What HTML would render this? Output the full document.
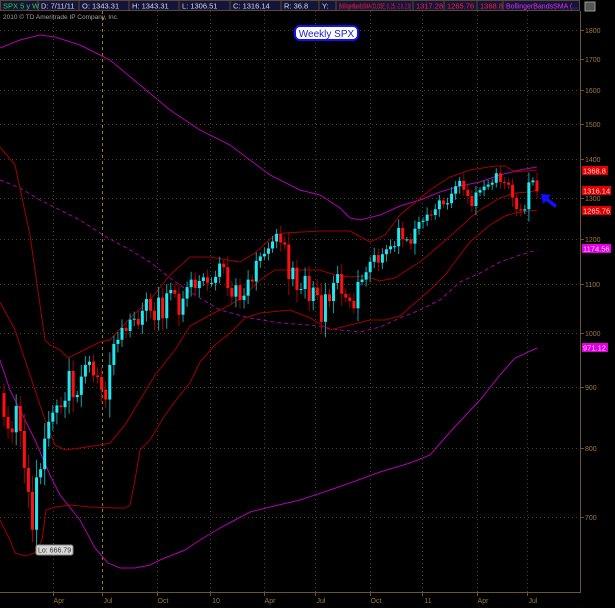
<!DOCTYPE html><html><head><style>
body{margin:0;background:#000;width:615px;height:608px;overflow:hidden;font-family:"Liberation Sans",sans-serif}
svg{display:block}
</style></head><body>
<svg id="s" width="615" height="608" xmlns="http://www.w3.org/2000/svg" font-family="Liberation Sans, sans-serif">
<rect width="615" height="608" fill="#000"/>
<g id="grid"></g>
<g fill="none" stroke-width="1">
<polyline stroke="#b000b0" points="0,48 20,40 40,35 55,37 80,45 110,60 140,85 170,110 200,130 230,145 250,160 270,175 300,190 320,195 340,208 350,218 360,220 380,215 400,206 420,200 440,192 460,186 480,182 500,175 520,170 537,167"/>
<polyline stroke="#a000a0" stroke-dasharray="4,3" points="0,180 20,188 40,200 60,210 80,220 108,238 130,250 150,262 170,278 190,292 220,310 250,318 280,323 310,325 340,330 360,332 380,327 400,318 420,310 440,300 460,282 480,273 500,262 520,255 537,250"/>
<polyline stroke="#b000b0" points="0,360 10,390 20,410 35,440 50,475 60,495 80,520 95,548 108,563 120,568 135,568 150,565 160,560 170,556 185,550 200,540 220,528 235,520 250,512 270,507 300,500 330,490 350,483 380,472 410,463 430,455 450,432 480,400 500,375 515,358 537,348"/>
<polyline stroke="#a00000" points="0,147 15,165 30,235 45,340 50,345 60,350 68,358 80,352 100,342 110,340 130,318 150,300 170,275 190,257 210,257 240,262 255,253 275,235 285,233 320,231 350,231 370,242 385,235 400,215 430,190 450,177 470,170 495,166 505,166 515,172 537,170"/>
<polyline stroke="#a00000" points="0,302 15,330 30,375 45,420 55,445 65,450 80,448 100,445 110,443 125,425 140,400 155,375 175,350 190,326 210,315 230,305 245,295 260,280 275,270 290,270 320,270 335,275 350,277 365,276 380,281 395,278 410,268 420,262 440,245 455,232 470,218 480,210 500,198 515,193 530,192 537,190"/>
<polyline stroke="#a00000" points="0,520 10,540 15,553 25,556 35,553 42,540 46,510 55,507 70,505 90,507 115,508 125,508 130,505 135,480 140,450 150,440 165,415 180,395 190,383 200,362 215,345 230,333 245,318 260,313 290,310 310,318 330,330 350,325 370,320 385,320 400,316 415,303 430,290 445,275 460,255 470,242 490,225 505,216 515,213 537,210"/>
</g>
<g id="candles"></g>
<!-- header -->
<rect x="0" y="0" width="580" height="11" fill="#14143c"/>
<g stroke="#5a4a30" fill="none"><rect x="0.5" y="0.5" width="579" height="10"/>
<path d="M38 0V11M79 0V11M129 0V11M179 0V11M230 0V11M281 0V11M319 0V11M336 0V11M413 0V11M444 0V11M477 0V11M503 0V11"/></g>
<g font-size="7.5" fill="#d8d8e8">
<text x="3" y="8.5" fill="#30d040">SPX 5 y W</text>
<text x="41" y="8.5">D: 7/11/11</text>
<text x="82" y="8.5">O: 1343.31</text>
<text x="132" y="8.5">H: 1343.31</text>
<text x="182" y="8.5">L: 1306.51</text>
<text x="233" y="8.5">C: 1316.14</text>
<text x="284" y="8.5">R: 36.8</text>
<text x="322" y="8.5">Y:</text>
<text x="339" y="8.5" fill="#ff2030" textLength="72" lengthAdjust="spacingAndGlyphs">BollingerBandsSMA (CLOSE, 0, 25, -2.0, 2.0)</text>
<text x="416" y="8.5" fill="#ff2030">1317.28</text>
<text x="447" y="8.5" fill="#ff2030">1265.76</text>
<text x="480" y="8.5" fill="#ff2030">1368.8</text>
<text x="506" y="8.5" fill="#e030e0" textLength="72" lengthAdjust="spacingAndGlyphs">BollingerBandsSMA (...</text>
</g>
<rect x="585" y="2" width="10" height="9" fill="#555" stroke="#999"/>
<text x="3" y="19" font-size="6.5" fill="#a0a0a0">2010 © TD Ameritrade IP Company, Inc.</text>
<!-- Weekly label -->
<rect x="295" y="26" width="63" height="14" rx="5" fill="#fff" stroke="#1010ff" stroke-width="2"/>
<text x="326.5" y="37" font-size="10" fill="#2020d0" text-anchor="middle">Weekly SPX</text>
<!-- axes -->
<path d="M580.5 11V592.5H0" stroke="#6b5530" fill="none"/>
<g id="ax" font-size="7" fill="#9a7a40"></g>
<!-- price boxes -->
<g font-size="7.5" fill="#fff">
<rect x="582" y="166" width="26" height="9" fill="#e00000"/><text x="583" y="173.5" fill="#ffd0d0">1368.8</text>
<rect x="582" y="186" width="29" height="9" fill="#e00000"/><text x="583" y="193.5" fill="#ffd0d0">1316.14</text>
<rect x="582" y="206" width="29" height="9" fill="#e00000"/><text x="583" y="213.5" fill="#ffd0d0">1265.76</text>
<rect x="582" y="244" width="29" height="9" fill="#e000e0"/><text x="583" y="251.5" fill="#ffd0ff">1174.56</text>
<rect x="582" y="343" width="26" height="9" fill="#e000e0"/><text x="583" y="350.5" fill="#ffd0ff">971.12</text>
</g>
<!-- arrow -->
<path d="M541 194 L551 195 L548 198 L557 205 L555 208 L546 201 L543 204 Z" fill="#1010ff"/>
<!-- Lo label -->
<rect x="36" y="545" width="37" height="10" rx="2" fill="#d8d8d8" stroke="#888"/>
<text x="38" y="552.5" font-size="7" fill="#333">Lo: 666.79</text>
</svg>
<script>
var NS="http://www.w3.org/2000/svg";
function Y(p){return 333-516*Math.log(p/1000);}
function el(t,a,par){var e=document.createElementNS(NS,t);for(var k in a)e.setAttribute(k,a[k]);if(t=="text"&&a.txt){e.textContent=a.txt;e.removeAttribute("txt");}par.appendChild(e);return e;}
var g=document.getElementById("grid"),ax=document.getElementById("ax"),c=document.getElementById("candles");
for(var p=700;p<=1800;p+=100){var y=Math.round(Y(p))+.5;el("line",{x1:0,x2:580,y1:y,y2:y,stroke:"#4a3c1c","stroke-dasharray":"1,3"},g);el("line",{x1:580,x2:584,y1:y,y2:y,stroke:"#6b5530"},g);el("text",{x:585,y:y+2.5,txt:""+p},ax);}
var xs=[[59,"Apr"],[108,"Jul"],[163,"Oct"],[216,"10"],[270,"Apr"],[321,"Jul"],[376,"Oct"],[428,"11"],[483,"Apr"],[533,"Jul"]];
xs.forEach(function(d,i){var x=d[0]-5.5;el("line",{x1:x,x2:x,y1:11,y2:592,stroke:i==1?"#a07820":"#4a3c1c","stroke-dasharray":i==1?"3,3":"1,3"},g);el("line",{x1:x,x2:x,y1:592,y2:596,stroke:"#6b5530"},g);el("text",{x:d[0],y:603,"text-anchor":"middle",txt:d[1]},ax);});
var cl=[850,831,825,868,827,770,735,683,756,768,815,842,857,869,866,877,929,883,887,919,940,946,921,918,896,879,940,979,987,1010,1004,1026,1028,1016,1044,1068,1044,1025,1071,1029,1080,1087,1079,1036,1069,1093,1109,1091,1106,1114,1102,1102,1115,1144,1136,1091,1073,1097,1066,1075,1109,1105,1150,1160,1166,1178,1194,1212,1192,1187,1110,1135,1087,1089,1117,1064,1092,1076,1022,1078,1064,1102,1121,1079,1071,1064,1049,1104,1109,1125,1148,1163,1146,1165,1176,1183,1183,1226,1199,1199,1189,1224,1240,1243,1258,1257,1271,1293,1283,1286,1310,1329,1343,1320,1304,1279,1313,1319,1328,1333,1338,1363,1340,1338,1333,1300,1271,1268,1271,1339,1344,1316];
var n=cl.length,st=(537-4)/(n-1),prev=890;
for(var i=0;i<n;i++){var o=prev,C=cl[i],x=4+i*st,up=C>=o,d=Math.abs(C-o);var h=Math.max(o,C)+d*0.25+6+(i*7%9),l=Math.min(o,C)-d*0.25-6-(i*5%11);if(i==7)l=666.79;
var col=up?"#20e8f0":"#ff1010",wc=up?"#10a0a8":"#a00000";
el("line",{x1:x,x2:x,y1:Y(h),y2:Y(l),stroke:wc},c);
var t=Y(Math.max(o,C)),b=Y(Math.min(o,C));el("rect",{x:x-1.5,y:t,width:3,height:Math.max(1,b-t),fill:col},c);prev=C;}
</script>
</body></html>
